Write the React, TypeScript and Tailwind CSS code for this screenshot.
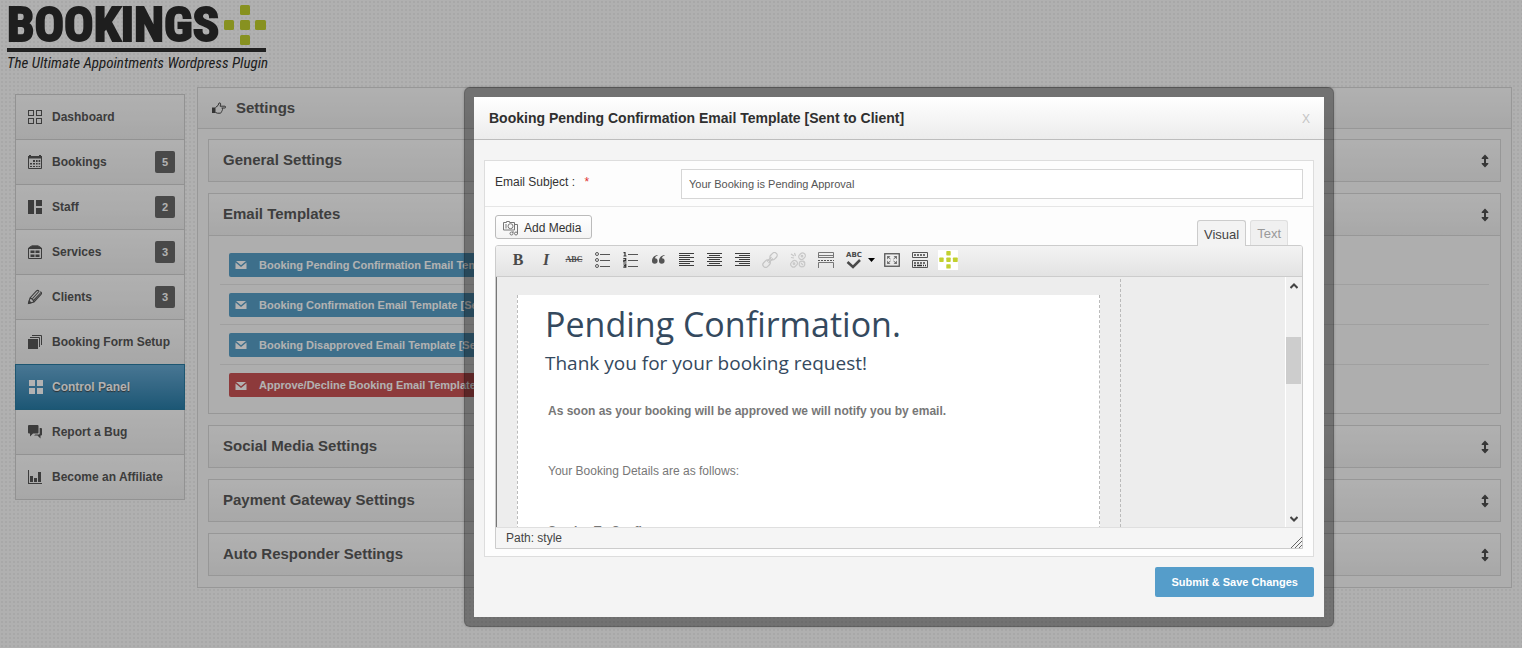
import React from "react";

type IconProps = { className?: string };

const Svg = ({ children, size = 16, box = 16, className = "" }: { children: React.ReactNode; size?: number; box?: number; className?: string }) => (
  <svg width={size} height={size} viewBox={`0 0 ${box} ${box}`} className={`shrink-0 ${className}`} fill="none" stroke="none" aria-hidden="true">
    {children}
  </svg>
);

const PlusMark = ({ className }: IconProps) => (
  <svg viewBox="0 0 42 41" className={className} fill="#c2d02f" aria-hidden="true">
    <rect x="16" y="0" width="10" height="10" rx="1.500" />
    <rect x="0" y="15" width="10" height="10" rx="1.500" />
    <rect x="16" y="15" width="10" height="10" rx="1.500" />
    <rect x="31" y="15" width="11" height="10" rx="1.500" />
    <rect x="16" y="30" width="10" height="10" rx="1.500" />
  </svg>
);

const navIcons = {
  dashboard: (
    <g stroke="currentColor">
      <rect x="1.5" y="1.5" width="5" height="5" />
      <rect x="9.5" y="1.5" width="5" height="5" />
      <rect x="1.5" y="9.5" width="5" height="5" />
      <rect x="9.5" y="9.5" width="5" height="5" />
    </g>
  ),
  calendar: (
    <g>
      <path d="M1.500 4v10.500h13V4" stroke="currentColor" />
      <path fill="currentColor" d="M1 2h1V1h2v1h8V1h2v1h1v2.500H1z" />
      <path
        fill="currentColor"
        d="M6 6h2v2H6zM9 6h1.600v2H9zM11.600 6h1.600v2h-1.600zM3 9h2v1.600H3zM6 9h2v1.600H6zM9 9h1.600v1.600H9zM11.600 9h1.600v1.600h-1.600zM3 12h2v1H3zM6 12h2v1H6zM9 12h1.600v1H9zM11.600 12h1.600v1h-1.600z"
      />
    </g>
  ),
  staff: <path fill="currentColor" d="M1 1h6v14H1zM9 1h6v6H9zM9 9h6v6H9z" />,
  services: (
    <g>
      <path d="M1.5 14.5V4L5 1.8h6L14.5 4v10.500z" stroke="currentColor" />
      <path d="M2 3.500L5 2h6l3 1.500V5H2z" fill="currentColor" />
      <path d="M3.500 6.500h4v2.500h-4zM8.500 6.500h4v2.500h-4zM3.500 10.500h4V13h-4zM8.500 10.500h4V13h-4z" fill="currentColor" />
    </g>
  ),
  clients: (
    <g stroke="currentColor" strokeWidth="1.100">
      <path d="M1.500 14.500L3 9 9.500 2c1.300-1.200 2.700-.500 2.300 1M1.500 14.500L7 13l7-7.500c1-1.200.500-2.800-1-2.500M3 9c2 .500 3.500 2 4 4M5.500 9.500l6-6.500M6.800 11.200L13.500 4" />
      <path d="M1.500 14.500l.700-2.500 1.800 1.800z" fill="currentColor" />
    </g>
  ),
  form: (
    <g>
      <rect x="1" y="5" width="10" height="10" fill="currentColor" />
      <path d="M3 3.500h9.500V13M5 1.500h9.500V11" stroke="currentColor" />
    </g>
  ),
  panel: <path fill="currentColor" d="M2 1h6v6H2zM10 1h6v6h-6zM2 9h6v6H2zM10 9h6v6h-6z" />,
  bug: (
    <g fill="currentColor">
      <path d="M2 1h8.500a1 1 0 0 1 1 1v6.500a1 1 0 0 1-1 1H6L3 12.500V9.500H2a1 1 0 0 1-1-1V2a1 1 0 0 1 1-1z" />
      <path d="M12.700 4H14a1 1 0 0 1 1 1v5.500a1 1 0 0 1-1 1h-.500V14.500l-3-3H7l1.300-1h3.400a1 1 0 0 0 1-1z" />
    </g>
  ),
  chart: <path fill="currentColor" d="M1 1h1v13h13v1H1zM3 7h3v6H3zM7 9h3v4H7zM11 3h3v10h-3z" />,
};

const nav: { label: string; icon: keyof typeof navIcons; count?: number; active?: boolean }[] = [
  { label: "Dashboard", icon: "dashboard" },
  { label: "Bookings", icon: "calendar", count: 5 },
  { label: "Staff", icon: "staff", count: 2 },
  { label: "Services", icon: "services", count: 3 },
  { label: "Clients", icon: "clients", count: 3 },
  { label: "Booking Form Setup", icon: "form" },
  { label: "Control Panel", icon: "panel", active: true },
  { label: "Report a Bug", icon: "bug" },
  { label: "Become an Affiliate", icon: "chart" },
];

function Logo() {
  return (
    <header className="flex w-[259px] flex-col">
      <div className="flex h-[47px] items-start justify-between border-b-4 border-[#303030]">
        <span className="font-['Liberation_Sans_Narrow','Roboto_Condensed','Liberation_Sans',sans-serif] text-[49px] leading-[40px] font-bold text-[#2c2c2c] [-webkit-text-stroke:2px_#2c2c2c]">
          BOOKINGS
        </span>
        <PlusMark className="h-[41px] w-[42px]" />
      </div>
      <p className="mt-[3px] font-['Liberation_Sans_Narrow','Roboto_Condensed','Liberation_Sans',sans-serif] text-[15px] leading-4 whitespace-nowrap text-[#2c2c2c] italic">
        The Ultimate Appointments Wordpress Plugin
      </p>
    </header>
  );
}

function Sidebar() {
  return (
    <nav className="mt-[7px] w-[170px] shrink-0 self-start border-x border-t border-[#d2d2d2]">
      {nav.map((n) => (
        <a
          key={n.label}
          href="#"
          className={
            n.active
              ? "-mx-px -mt-px flex h-[46px] items-center gap-2 border border-[#2a7ba3] bg-linear-to-b from-[#67aad3] to-[#287da8] pr-[9px] pl-[11px] text-[12px] font-bold text-white [text-shadow:0_1px_1px_#444]"
              : "flex h-[45px] items-center gap-2 border-b border-[#d2d2d2] bg-linear-to-b from-[#fdfdfd] to-[#f0f0f0] pr-[9px] pl-[11px] text-[12px] font-bold text-[#565656]"
          }
        >
          <Svg>{navIcons[n.icon]}</Svg>
          <span className="ml-px flex-1 whitespace-nowrap">{n.label}</span>
          {n.count !== undefined && (
            <span className="flex h-[22px] w-5 items-center justify-center rounded-xs bg-[#696969] text-[11px] text-white">{n.count}</span>
          )}
        </a>
      ))}
    </nav>
  );
}

const UpDown = () => (
  <svg width="8" height="14" viewBox="0 0 8 14" fill="#4f4f4f" aria-hidden="true">
    <path d="M4 .500l3.300 3.500v1H5v4h2.300v1L4 13.500.700 10V9H3V5H.700V4z" />
  </svg>
);

function Section({ title, children }: { title: string; children?: React.ReactNode }) {
  return (
    <section className="border border-[#d9d9d9]">
      <button
        type="button"
        className={`flex w-full items-center justify-between bg-linear-to-b from-[#fdfdfd] to-[#f1f1f1] pr-[11px] pl-[14px] text-[15px] font-bold text-[#5a5a5a] ${children ? "h-[42px] border-b border-[#d9d9d9]" : "h-[41px]"}`}
      >
        {title}
        <UpDown />
      </button>
      {children}
    </section>
  );
}

const templates = [
  { label: "Booking Pending Confirmation Email Template [Sent to Client]", red: false },
  { label: "Booking Confirmation Email Template [Sent to Client]", red: false },
  { label: "Booking Disapproved Email Template [Sent to Client]", red: false },
  { label: "Approve/Decline Booking Email Template [Sent to Admin]", red: true },
];

function Settings() {
  return (
    <main className="min-w-0 flex-1 border border-[#d9d9d9] bg-[#f9f9f9]">
      <h1 className="flex h-[41px] items-center gap-[10px] border-b border-[#d9d9d9] bg-linear-to-b from-[#fdfdfd] to-[#f1f1f1] pl-[14px] text-[15px] font-bold text-[#5a5a5a]">
        <svg width="14" height="12" viewBox="0 0 14 12" fill="none" stroke="#4a4a4a" aria-hidden="true">
          <path d="M0 5.500h3.500V11H0z" fill="#4a4a4a" stroke="none" />
          <path d="M3.500 5.500L6 3.500 7 1c1.500-.500 2 .700 1.500 2L8 4.200h5c1 .300.800 1.800 0 1.800H9.500M10 6c1 .500.800 1.600 0 1.900M9.800 8c.700.500.400 1.500-.300 1.700-.200 1-.800 1.500-1.500 1.500H5.500L3.500 10.500" />
        </svg>
        Settings
      </h1>
      <div className="flex flex-col gap-[11px] px-[10px] pt-[10px] pb-[11px]">
        <Section title="General Settings" />
        <Section title="Email Templates">
          <ul className="px-[11px] pt-[9px] pb-2">
            {templates.map((t, i) => (
              <li key={t.label} className={`flex h-10 items-center pl-[9px] ${i < 3 ? "border-b border-[#e6e6e6]" : ""}`}>
                <a
                  href="#"
                  className={`flex h-6 items-center gap-3 rounded-xs pt-px pr-3 pl-[6px] text-[11px] font-bold whitespace-nowrap text-white ${t.red ? "bg-[#cb5355]" : "bg-[#58a0c8]"}`}
                >
                  <svg width="12" height="10" viewBox="0 0 12 10" fill="currentColor" aria-hidden="true">
                    <path d="M1 1h10L6 5.200zM.500 2.500L6 7l5.500-4.500V9H.500z" />
                  </svg>
                  {t.label}
                </a>
              </li>
            ))}
          </ul>
        </Section>
        <Section title="Social Media Settings" />
        <Section title="Payment Gateway Settings" />
        <Section title="Auto Responder Settings" />
      </div>
    </main>
  );
}

const Lines = ({ align }: { align: "left" | "center" | "right" }) => {
  const widths = [15, 11, 15, 11, 15, 11, 15];
  return (
    <g fill="#3c3c3c">
      {widths.map((w, i) => (
        <rect key={i} x={align === "left" ? 1 : align === "right" ? 16 - w : 1 + (15 - w) / 2} y={1 + i * 2} width={w} height="1" />
      ))}
    </g>
  );
};

const tools: { name: string; art: React.ReactNode }[] = [
  { name: "Bold", art: <span className="font-['Liberation_Serif',serif] text-[16px] leading-5 font-bold">B</span> },
  { name: "Italic", art: <span className="font-['Liberation_Serif',serif] text-[16px] leading-5 font-bold italic">I</span> },
  { name: "Strikethrough", art: <span className="font-['Liberation_Serif',serif] text-[8px] leading-5 font-bold line-through">ABC</span> },
  {
    name: "Bulleted list",
    art: (
      <Svg>
        <g stroke="#555">
          <circle cx="3" cy="2" r="1.500" />
          <circle cx="3" cy="8" r="1.500" />
          <circle cx="3" cy="14" r="1.500" />
          <path d="M6 2.500h10M6 8.500h10M6 14.500h10" />
        </g>
      </Svg>
    ),
  },
  {
    name: "Numbered list",
    art: (
      <Svg>
        <path d="M6 2.500h10M6 8.500h10M6 14.500h10" stroke="#555" />
        <path d="M1.500.700H3V4M1.500 4h3M1.300 6.500h2.400v1.800H1.800v1.700h2.700M1.300 12h2.500v3.200H1.300M1.800 13.600h2" stroke="#333" strokeWidth="1.200" />
      </Svg>
    ),
  },
  {
    name: "Blockquote",
    art: (
      <Svg>
        <path
          d="M7.500 3C4 3.500 2 6 2 9a2.800 2.800 0 1 0 3-2.800C5.200 4.800 6 4 7.500 3.700zM14.500 3C11 3.500 9 6 9 9a2.800 2.800 0 1 0 3-2.800c.2-1.400 1-2.200 2.500-2.500z"
          fill="#555"
        />
      </Svg>
    ),
  },
  { name: "Align left", art: <Svg><Lines align="left" /></Svg> },
  { name: "Align center", art: <Svg><Lines align="center" /></Svg> },
  { name: "Align right", art: <Svg><Lines align="right" /></Svg> },
  {
    name: "Insert link",
    art: (
      <Svg>
        <g stroke="#c4c4c4" strokeWidth="1.200">
          <rect x="7.500" y="1.500" width="8" height="5.500" rx="2.700" transform="rotate(-45 11.500 4.200)" />
          <rect x=".500" y="9" width="8" height="5.500" rx="2.700" transform="rotate(-45 4.500 11.700)" />
          <path d="M5 9.500L9.500 5M6.500 11L11 6.500" />
        </g>
      </Svg>
    ),
  },
  {
    name: "Remove link",
    art: (
      <Svg>
        <g stroke="#c8c8c8" strokeWidth="1.200">
          <rect x="8.500" y="1.500" width="7" height="5.500" rx="2.700" transform="rotate(-45 12 4.200)" />
          <rect x=".500" y="9" width="7" height="5.500" rx="2.700" transform="rotate(-45 4 11.700)" />
          <circle cx="12" cy="12" r="2.800" />
          <path d="M1 2l3 2M4.500 1l1 3M1 5.500l3 .500M13 9l2 2M11 11l2 2" />
          <circle cx="12" cy="4.200" r=".800" />
          <circle cx="4" cy="11.700" r=".800" />
        </g>
      </Svg>
    ),
  },
  {
    name: "Insert more tag",
    art: (
      <Svg>
        <path d="M.500 6V.500h15V6M1 3.500h14M.500 5.500h15M.500 16v-5.500h15V16" stroke="#777" />
        <path d="M0 8.500h16" stroke="#555" strokeDasharray="2 1" />
      </Svg>
    ),
  },
  {
    name: "Spellcheck",
    art: (
      <span className="flex flex-col items-center">
        <span className="font-['DejaVu_Sans',sans-serif] text-[7px] leading-[7px] font-bold">ABC</span>
        <svg width="16" height="10" viewBox="0 0 16 10" fill="none" aria-hidden="true">
          <path d="M1.500 3L7 8l7-7" stroke="#4a4a4a" strokeWidth="2.500" />
        </svg>
      </span>
    ),
  },
  {
    name: "Fullscreen",
    art: (
      <Svg>
        <rect x=".750" y="1.750" width="14.500" height="12.500" stroke="#555" strokeWidth="1.300" />
        <path d="M3 4h3.500L3 7.500zM13 4H9.500L13 7.500zM3 12h3.500L3 8.500zM13 12H9.500L13 8.500z" fill="#777" />
        <path d="M4 5l2.500 2M12 5L9.500 7M4 11l2.500-2M12 11L9.500 9" stroke="#666" />
      </Svg>
    ),
  },
  {
    name: "Toggle kitchen sink",
    art: (
      <Svg>
        <path d="M.500.500h15v5H.500zM.500 8.500h15v7H.500z" stroke="#555" />
        <path d="M2 3h12" stroke="#444" strokeWidth="1.500" strokeDasharray="2 1" />
        <path d="M2 11h12" stroke="#444" strokeWidth="1.500" strokeDasharray="2 1" />
        <path d="M2 13.500h2M5 13.500h5M11 13.500h1M13 13.500h1" stroke="#333" strokeWidth="1.500" />
      </Svg>
    ),
  },
  {
    name: "Bookings shortcode",
    art: (
      <span className="flex h-5 w-5 items-center justify-center bg-white">
        <PlusMark className="h-[18px] w-[19px]" />
      </span>
    ),
  },
];

function Toolbar() {
  return (
    <div role="toolbar" className="flex h-[31px] items-center rounded-t-xs border-b border-[#ccc] bg-linear-to-b from-[#f3f3f3] to-[#e3e3e3] pb-[2px] pl-2">
      {tools.map((t) => (
        <React.Fragment key={t.name}>
          <button type="button" aria-label={t.name} className="flex h-5 w-7 shrink-0 items-center justify-center text-[#4a4a4a]">
            {t.art}
          </button>
          {t.name === "Spellcheck" && (
            <button type="button" aria-label="Spellcheck languages" className="flex h-5 w-[10px] shrink-0 items-center">
              <svg width="7" height="4" viewBox="0 0 7 4" aria-hidden="true">
                <path d="M0 0h7L3.500 4z" fill="#000" />
              </svg>
            </button>
          )}
        </React.Fragment>
      ))}
    </div>
  );
}

function Canvas() {
  return (
    <div className="flex h-[250px] overflow-hidden border-l border-[#777] bg-[#ededed]">
      <div className="flex min-w-0 flex-1 overflow-hidden pt-[2px] pl-5">
        <div className="w-[604px] shrink-0 border-r border-dashed border-[#bbb] pt-4">
          <article className="h-[400px] w-[583px] border-x border-dashed border-[#bbb] bg-white pl-[27px] text-[12px] leading-[15px] text-[#777]">
            <h2 className="pt-[2px] font-['Open_Sans','Noto_Sans',sans-serif] text-[34px] leading-[54px] font-normal whitespace-nowrap text-[#34495e]">
              Pending Confirmation.
            </h2>
            <h3 className="font-['Open_Sans','Noto_Sans',sans-serif] text-[19px] leading-6 font-normal whitespace-nowrap text-[#34495e]">
              Thank you for your booking request!
            </h3>
            <div className="flex flex-col gap-[45px] pt-[29px] pl-[3px]">
              <p className="font-bold">As soon as your booking will be approved we will notify you by email.</p>
              <p>Your Booking Details are as follows:</p>
              <p className="font-bold">Service To Confirm</p>
            </div>
          </article>
        </div>
      </div>
      <div className="flex w-[17px] shrink-0 flex-col items-center justify-between border-l border-white bg-[#f0f0f0]">
        <button type="button" aria-label="Scroll up" className="flex h-[17px] w-full items-center justify-center">
          <svg width="8" height="6" viewBox="0 0 8 6" fill="none" stroke="#444" strokeWidth="2" aria-hidden="true">
            <path d="M.500 5L4 1.500 7.500 5" />
          </svg>
        </button>
        <div className="mt-[43px] mb-auto h-[47px] w-[15px] self-start bg-[#cdcdcd]" />
        <button type="button" aria-label="Scroll down" className="flex h-[17px] w-full items-center justify-center">
          <svg width="8" height="6" viewBox="0 0 8 6" fill="none" stroke="#444" strokeWidth="2" aria-hidden="true">
            <path d="M.500 1L4 4.500 7.500 1" />
          </svg>
        </button>
      </div>
    </div>
  );
}

function Dialog() {
  return (
    <div
      role="dialog"
      aria-labelledby="dialog-title"
      className="w-[870px] rounded-md border-10 border-black/35 bg-[#f4f4f4] bg-clip-padding shadow-[0_0_3px_rgba(0,0,0,0.2)]"
    >
      <div className="flex h-[43px] items-center justify-between border-b border-[#bdbdbd] bg-linear-to-b from-white to-[#ececec] pr-[14px] pl-[15px]">
        <h2 id="dialog-title" className="text-[14px] font-bold text-[#2f2f2f]">
          Booking Pending Confirmation Email Template [Sent to Client]
        </h2>
        <button type="button" aria-label="Close" className="mt-[2px] text-[12px] text-[#c4c4c4]">
          X
        </button>
      </div>
      <form className="flex flex-col px-[10px] pt-5 pb-5">
        <div className="border border-[#ddd] bg-[#fdfdfd]">
          <div className="flex h-[46px] border-b border-[#e6e6e6] pt-2 pr-[10px] pl-[10px]">
            <label htmlFor="subject" className="w-[186px] shrink-0 pt-[5px] text-[12px] leading-4 text-[#333]">
              Email Subject : <span className="ml-[6px] text-[#e03030]">*</span>
            </label>
            <input
              id="subject"
              type="text"
              defaultValue="Your Booking is Pending Approval"
              className="h-[30px] min-w-0 flex-1 border border-[#d6d6d6] bg-white px-[7px] text-[11px] text-[#555] outline-none"
            />
          </div>
          <div className="px-[10px] pt-2 pb-[7px]">
            <div className="flex h-[30px] items-start justify-between">
              <button
                type="button"
                className="flex h-6 items-center gap-[5px] rounded-[3px] border border-[#bbb] bg-linear-to-b from-white to-[#f4f4f4] pt-px pr-[10px] pl-[7px] text-[12px] text-[#333]"
              >
                <svg width="16" height="16" viewBox="0 0 16 16" fill="none" stroke="#777" aria-hidden="true">
                  <path d="M.500 2.500h3v-1h3v1h5v7.500H.500zM11.500 4.500h3V14" />
                  <circle cx="7.500" cy="6.200" r="2.500" />
                  <path d="M3 4v4.500" />
                  <circle cx="8.500" cy="13.500" r="1.500" />
                  <circle cx="13" cy="13.500" r="1.500" />
                  <path d="M10 13v-2" />
                </svg>
                Add Media
              </button>
              <div role="tablist" className="mt-[5px] mr-[15px] flex gap-1">
                <button type="button" role="tab" aria-selected="true" className="relative z-10 h-[26px] rounded-t-[3px] border border-b-0 border-[#ccc] bg-[#f3f3f3] px-[6px] pt-[2px] text-[13px] text-[#444]">
                  Visual
                </button>
                <button type="button" role="tab" aria-selected="false" className="h-[25px] rounded-t-[3px] border border-b-0 border-[#dfdfdf] bg-[#f0f0f0] px-[6px] pt-[2px] text-[13px] text-[#999]">
                  Text
                </button>
              </div>
            </div>
            <div className="rounded-t-[3px] border border-[#ccc]">
              <Toolbar />
              <Canvas />
              <div className="flex h-[21px] items-end justify-between border-t border-[#dfdfdf] bg-[#f5f5f5] pl-[10px] text-[12px] text-[#444]">
                <span className="self-center">Path: style</span>
                <svg width="11" height="11" viewBox="0 0 11 11" stroke="#666" aria-hidden="true">
                  <path d="M0 11L11 0M4 11l7-7M8 11l3-3" />
                </svg>
              </div>
            </div>
          </div>
        </div>
        <button type="submit" className="mt-[10px] h-[30px] self-end rounded-xs bg-[#559dca] px-4 text-[11px] font-bold text-white">
          Submit &amp; Save Changes
        </button>
      </form>
    </div>
  );
}

export default function App() {
  return (
    <div className="relative min-h-screen overflow-hidden bg-[#fcfcfc] bg-[radial-gradient(#f1f1f1_1px,transparent_1px)] bg-[size:4px_4px] font-['Liberation_Sans',Arial,sans-serif]">
      <div className="px-[7px] pt-[5px]">
        <Logo />
      </div>
      <div className="flex gap-3 pt-4 pr-[10px] pb-[60px] pl-[15px]">
        <Sidebar />
        <Settings />
      </div>
      <div className="absolute inset-0 flex items-start justify-center bg-black/30 pt-[87px] pl-[276px]">
        <Dialog />
      </div>
    </div>
  );
}
